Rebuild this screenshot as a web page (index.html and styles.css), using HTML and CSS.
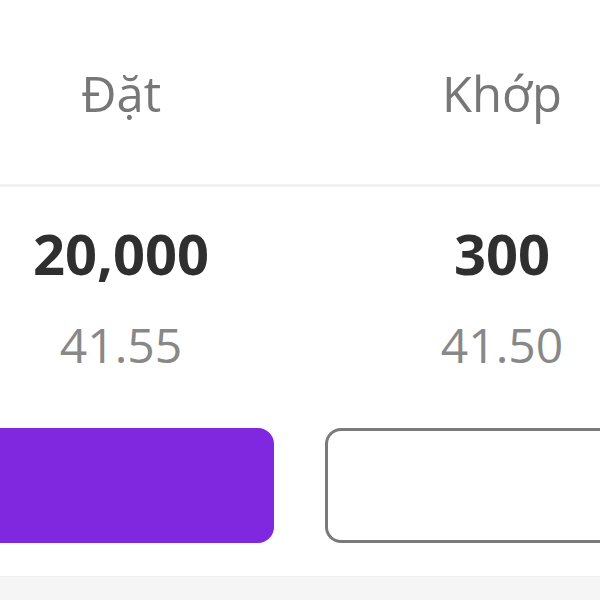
FILE: index.html
```html
<!DOCTYPE html>
<html lang="vi">
<head>
<meta charset="UTF-8">
<meta name="viewport" content="width=device-width, initial-scale=1.0">
<title>Lệnh</title>
<link rel="stylesheet" href="styles.css">
</head>
<body>
<div class="header">
  <div class="col">Đặt</div>
  <div class="col">Khớp</div>
</div>

<div class="values">
  <div class="col">
    <div class="qty">20,000</div>
    <div class="price">41.55</div>
  </div>
  <div class="col">
    <div class="qty">300</div>
    <div class="price">41.50</div>
  </div>
</div>

<div class="actions">
  <button class="btn btn-primary"></button>
  <button class="btn btn-outline"></button>
</div>

<div class="footer"></div>
</body>
</html>
```

FILE: styles.css
```css
html, body { margin: 0; padding: 0; }
body { width: 600px; height: 600px; overflow: hidden; background: #fff; font-family: "Open Sans", "Noto Sans", sans-serif; }

/* the two columns are centred at 121px and 502px */
.header, .values { display: grid; grid-template-columns: 242px 1fr 196px; }
.col { text-align: center; }
.col + .col { grid-column: 3; }

.header { padding: 60px 0 58px; border-bottom: 3px solid #f1f1f1; }
.header .col { font-size: 49px; line-height: 66px; color: #777; }

.values { padding-top: 28px; }
.qty { font-size: 56px; font-weight: 700; line-height: 76px; color: #2f2f2f; }
.price { margin-top: 21px; font-size: 48px; line-height: 65px; color: #888; }

.actions { display: flex; gap: 51px; margin-top: 51px; }
.btn { height: 115px; padding: 0; box-sizing: border-box; }
.btn-primary { flex: 0 0 274px; background: #7f28e0; border: none; border-radius: 0 16px 16px 0; }
.btn-outline { flex: 1; background: #fff; border: 3px solid #7a7a7a; border-right: none; border-radius: 16px 0 0 16px; }

.footer { margin-top: 33px; height: 24px; background: #f5f5f5; border-top: 1px solid #eee; }
```
